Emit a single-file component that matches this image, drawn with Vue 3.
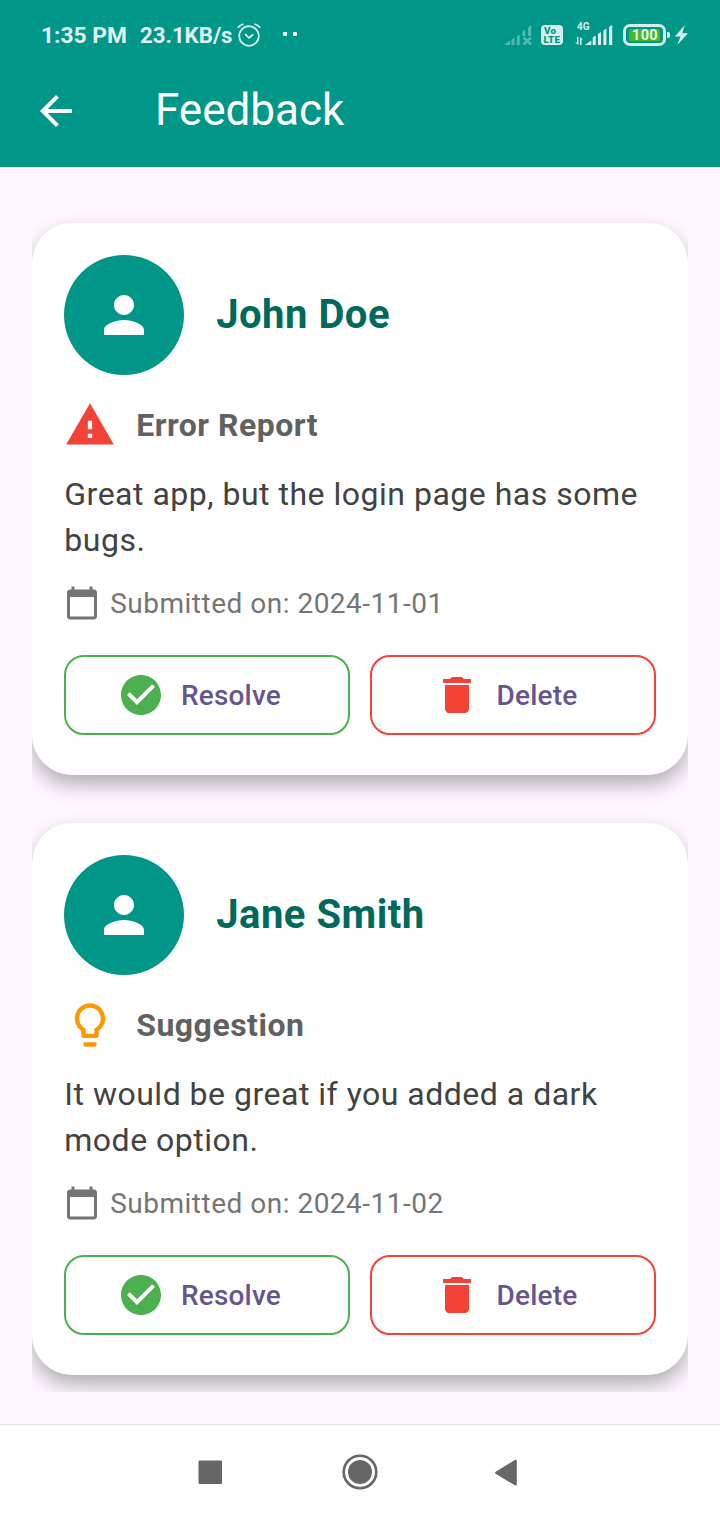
<script setup>
const icons = {
  person: 'M12 12c2.21 0 4-1.79 4-4s-1.79-4-4-4-4 1.79-4 4 1.79 4 4 4zm0 2c-2.67 0-8 1.34-8 4v2h16v-2c0-2.66-5.33-4-8-4z',
  warning: 'M1 21h22L12 2 1 21zm12-3h-2v-2h2v2zm0-4h-2v-4h2v4z',
  bulb: 'M9 21c0 .55.45 1 1 1h4c.55 0 1-.45 1-1v-1H9v1zm3-19C8.14 2 5 5.14 5 9c0 2.38 1.19 4.47 3 5.74V17c0 .55.45 1 1 1h6c.55 0 1-.45 1-1v-2.26c1.81-1.27 3-3.36 3-5.74 0-3.86-3.14-7-7-7zm2.85 11.1l-.85.6V16h-4v-2.3l-.85-.6C7.8 12.16 7 10.63 7 9c0-2.76 2.24-5 5-5s5 2.24 5 5c0 1.63-.8 3.16-2.15 4.1z',
  calendar: 'M20 3h-1V1h-2v2H7V1H5v2H4c-1.1 0-2 .9-2 2v16c0 1.1.9 2 2 2h16c1.1 0 2-.9 2-2V5c0-1.1-.9-2-2-2zm0 18H4V8h16v13z',
  check: 'M12 2C6.48 2 2 6.48 2 12s4.48 10 10 10 10-4.48 10-10S17.52 2 12 2zm-2 15l-5-5 1.41-1.41L10 14.17l7.59-7.59L19 8l-9 9z',
  trash: 'M6 19c0 1.1.9 2 2 2h8c1.1 0 2-.9 2-2V7H6v12zM19 4h-3.5l-1-1h-5l-1 1H5v2h14V4z',
}

const feedback = [
  { name: 'John Doe', type: 'Error Report', icon: 'warning', message: 'Great app, but the login page has some bugs.', date: '2024-11-01' },
  { name: 'Jane Smith', type: 'Suggestion', icon: 'bulb', message: 'It would be great if you added a dark mode option.', date: '2024-11-02' },
]
</script>

<template>
  <div class="screen">
    <header class="top">
      <div class="status">
        <span class="clock">1:35 PM</span>
        <span class="speed">23.1KB/s</span>
        <svg class="alarm" width="24" height="26" viewBox="0 0 24 26" fill="none" stroke="currentColor" stroke-width="1.7" stroke-linecap="round" stroke-linejoin="round">
          <circle cx="12" cy="15" r="9.8" />
          <path d="M8.6 13.7l3.4 3.3 3.8-3.3M1.3 6.2C2.6 4.8 4.2 3.8 6 3.2M22.7 6.2c-1.3-1.4-2.9-2.4-4.7-3" />
        </svg>
        <span class="dots"><i></i><i></i></span>

        <svg class="nosim" width="28" height="20" viewBox="0 0 28 20" fill="currentColor">
          <path d="M0 20l6-4.500V20zM7.500 14.500l3-2V20h-3zM12.800 11.500l3-2V20h-3zM18.300 6.500l3-2V11h-3zM24 2.500l3.300-2.500v11H24z" />
          <path d="M19.500 12.500l7.500 7M27 12.500l-7.500 7" fill="none" stroke="currentColor" stroke-width="2.600" />
        </svg>
        <span class="volte"><b>Vo</b><b>LTE</b></span>
        <span class="cell">
          <span class="gen">4G</span>
          <svg width="38" height="20" viewBox="0 0 38 20" fill="currentColor">
            <path d="M2 12h1.500v8L0 17.500h2zM5 20v-8l3 2.500H6.500V20zM9.800 20l6.500-4.500V20zM17.700 12.500l3-2V20h-3zM23 9l3-2v13h-3zM28.400 5.500l3-2V20h-3zM34 2l3.200-2v20H34z" />
          </svg>
        </span>
        <span class="battery"><span class="level">100</span></span>
        <span class="cap"></span>
        <svg class="bolt" width="13" height="20" viewBox="0 0 13 20" fill="currentColor">
          <path d="M9.800 0L0 11.500h5.500L2.300 20 13 8.300H7.200z" />
        </svg>
      </div>
      <div class="appbar">
        <svg width="48" height="48" viewBox="0 0 24 24" fill="#fff">
          <path d="M20 11H7.830l5.590-5.590L12 4l-8 8 8 8 1.410-1.410L7.830 13H20v-2z" />
        </svg>
        <h1>Feedback</h1>
      </div>
    </header>

    <main class="list">
      <article v-for="item in feedback" :key="item.name" class="card">
        <div class="user">
          <span class="avatar">
            <svg width="60" height="60" viewBox="0 0 24 24"><path :d="icons.person" /></svg>
          </span>
          <h2>{{ item.name }}</h2>
        </div>
        <div class="type">
          <svg :class="item.icon" width="52" height="52" viewBox="0 0 24 24"><path :d="icons[item.icon]" /></svg>
          <span>{{ item.type }}</span>
        </div>
        <p class="message">{{ item.message }}</p>
        <div class="date">
          <svg width="36" height="36" viewBox="0 0 24 24"><path :d="icons.calendar" /></svg>
          <span>Submitted on: {{ item.date }}</span>
        </div>
        <div class="actions">
          <button class="resolve">
            <svg width="48" height="48" viewBox="0 0 24 24"><path :d="icons.check" /></svg>
            <span>Resolve</span>
          </button>
          <button class="delete">
            <svg width="48" height="48" viewBox="0 0 24 24"><path :d="icons.trash" /></svg>
            <span>Delete</span>
          </button>
        </div>
      </article>
    </main>

    <nav class="nav">
      <svg width="24" height="24" viewBox="0 0 24 24"><rect x=".5" y=".5" width="23.500" height="23.500" rx="1" /></svg>
      <svg width="38" height="38" viewBox="0 0 38 38">
        <circle cx="20" cy="19" r="16.300" fill="none" stroke="#666" stroke-width="2.600" />
        <circle cx="20" cy="19" r="12" />
      </svg>
      <svg width="23" height="27" viewBox="0 0 23 27"><path d="M.7 12.800L19.800 1Q21.800.3 21.800 2.300v22.700q0 2-2 1.300L.7 14.800q-1.400-1 0-2z" /></svg>
    </nav>
  </div>
</template>

<style>
body {
  margin: 0;
}
</style>

<style scoped>
.screen {
  width: 720px;
  height: 1520px;
  display: flex;
  flex-direction: column;
  background: #fef7ff;
  font-family: Roboto, "Liberation Sans", sans-serif;
  overflow: hidden;
}
svg {
  display: block;
  flex: none;
}
.top {
  height: 167px;
  flex: none;
  background: #009688;
  color: #fff;
}
.status {
  height: 70px;
  display: flex;
  align-items: center;
  box-sizing: border-box;
  padding: 0 32px 0 41px;
  color: #daf0ee;
  white-space: nowrap;
}
.clock,
.speed {
  font-size: 22.800px;
  line-height: 28px;
  font-weight: 700;
  color: #e0f3f1;
}
.clock {
  width: 99px;
  padding-top: 2px;
}
.speed {
  width: 93px;
  font-size: 22.200px;
}
.alarm {
  margin: 0 0 2px 4.400px;
}
.dots {
  display: flex;
  gap: 6px;
  margin: 0 auto 2px 21.600px;
}
.dots i {
  width: 4px;
  height: 4px;
  border-radius: 1px;
  background: #fff;
}
.nosim {
  opacity: 0.380;
}
.volte {
  width: 22px;
  height: 20px;
  margin-left: 9px;
  border-radius: 4px;
  background: #d5eeeb;
  color: #009688;
  display: flex;
  flex-direction: column;
  justify-content: center;
}
.volte b {
  height: 9px;
  font-size: 9.800px;
  line-height: 9px;
  padding-left: 3px;
  font-weight: 900;
  letter-spacing: 0.200px;
}
.volte b + b {
  padding-left: 2.500px;
}
.cell {
  position: relative;
  margin-left: 12px;
}
.gen {
  position: absolute;
  left: 2px;
  top: -4px;
  font-size: 10px;
  line-height: 12px;
  font-weight: 700;
}
.battery {
  width: 43px;
  height: 22px;
  box-sizing: border-box;
  margin-left: 10px;
  padding: 2px 3px;
  border: 3px solid #d5eeeb;
  border-radius: 7px;
}
.level {
  display: block;
  height: 12px;
  padding-left: 1px;
  border-radius: 2px;
  background: #43b929;
  color: #e8f7ea;
  font-size: 14.500px;
  line-height: 13px;
  font-weight: 700;
  letter-spacing: 0.300px;
  text-align: center;
}
.cap {
  width: 3px;
  height: 6px;
  margin-left: 1px;
  border-radius: 0 2px 2px 0;
  background: #d5eeeb;
}
.bolt {
  margin-left: 5px;
}
.appbar {
  height: 82px;
  display: flex;
  align-items: center;
  padding-left: 32px;
}
.appbar h1 {
  margin: 0 0 2px 75px;
  font-size: 44px;
  line-height: 56px;
  font-weight: 400;
}
.list {
  height: 1193px;
  flex: none;
  margin: 32px 32px 0;
  overflow: hidden;
}
.card {
  box-sizing: border-box;
  height: 552px;
  margin: 24px 0 48px;
  padding: 32px;
  border-radius: 40px;
  background: #fff;
  box-shadow: 0 10px 20px rgba(0, 0, 0, 0.300);
}
.user {
  display: flex;
  align-items: center;
  gap: 32px;
}
.avatar {
  width: 120px;
  height: 120px;
  border-radius: 50%;
  background: #009688;
  fill: #fff;
  display: flex;
  align-items: center;
  justify-content: center;
}
h2 {
  margin: 0 0 2px;
  padding-left: 0.200px;
  color: #00695c;
  font-size: 40px;
  line-height: 57px;
  font-weight: 700;
  letter-spacing: 0.500px;
}
.type {
  display: flex;
  align-items: center;
  gap: 20.200px;
  height: 52px;
  margin-top: 24px;
  color: #616161;
  font-size: 32px;
  line-height: 46px;
  font-weight: 700;
  letter-spacing: 0.500px;
}
.warning {
  fill: #f44336;
}
.bulb {
  fill: #ff9800;
}
.message {
  margin: 20px 0;
  padding-left: 0.300px;
  color: #424242;
  font-size: 32px;
  line-height: 46px;
  letter-spacing: 0.500px;
}
.date {
  display: flex;
  align-items: center;
  gap: 10.200px;
  height: 40px;
  color: #757575;
  fill: #757575;
  font-size: 28px;
  line-height: 40px;
  letter-spacing: 0.500px;
}
.date span {
  padding-top: 2px;
}
.actions {
  display: grid;
  grid-template-columns: 1fr 1fr;
  gap: 20px;
  margin-top: 32px;
}
button {
  height: 80px;
  box-sizing: border-box;
  display: flex;
  align-items: center;
  justify-content: center;
  gap: 16px;
  padding: 0 46px 0 30px;
  border: 2px solid #4caf50;
  border-radius: 20px;
  background: none;
  color: #65558f;
  fill: #4caf50;
  font: 500 28px/40px Roboto, "Liberation Sans", sans-serif;
  letter-spacing: 0.200px;
}
button span {
  padding-top: 2px;
}
.delete {
  border-color: #f44336;
  fill: #f44336;
}
.nav {
  height: 96px;
  box-sizing: border-box;
  margin-top: auto;
  padding: 0 202px 1px 198px;
  border-top: 1px solid #e3dfe4;
  background: #fff;
  fill: #666;
  display: flex;
  align-items: center;
  justify-content: space-between;
}
</style>
